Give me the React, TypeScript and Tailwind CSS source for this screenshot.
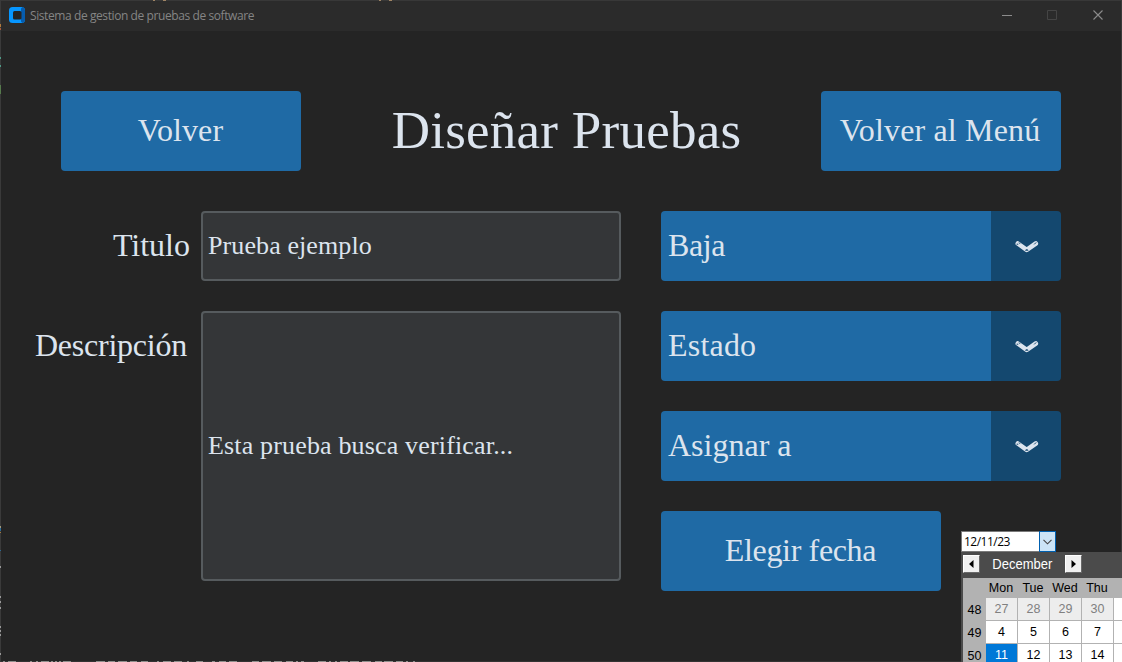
import type { ReactNode } from "react";

const SERIF = "font-['Liberation_Serif',serif] text-[#dce4ee]";
const SANS = "font-['Liberation_Sans',sans-serif]";

function Button({ className, children }: { className: string; children: ReactNode }) {
  return (
    <button className={`flex h-20 shrink-0 items-center justify-center rounded bg-[#1f6aa5] pb-0.5 text-[32px] leading-none whitespace-nowrap ${SERIF} ${className}`}>
      {children}
    </button>
  );
}

function Chevron() {
  return (
    <svg width="24" height="14" viewBox="0 0 24 14" fill="none">
      <path d="M2.800 3.500 L11.700 9.900 L20.800 3.500" stroke="#dce4ee" strokeWidth="4.600" strokeLinecap="round" strokeLinejoin="round" />
      <path d="M1.600 4.200h1.700M4 2.500l1 1.300M19.200 4.400l2-2" stroke="#14486f" strokeWidth="1" />
      <path d="M10.200 10.700c0-2 3.200-2 3.200 0z" fill="#14486f" />
    </svg>
  );
}

function Select({ label, className }: { label: string; className: string }) {
  return (
    <div className="flex h-[70px] w-[400px] overflow-hidden rounded">
      <div className={`flex flex-1 items-center bg-[#1f6aa5] pb-0.5 pl-[7px] text-[32px] leading-none ${SERIF}`}>
        <span className={className}>{label}</span>
      </div>
      <div className="flex w-[70px] items-center justify-center bg-[#14486f] pt-px pl-0.5">
        <Chevron />
      </div>
    </div>
  );
}

function Arrow({ left }: { left?: boolean }) {
  return (
    <div className="flex h-[18px] w-[17px] items-center justify-center border border-t-white border-r-[#696969] border-b-[#696969] border-l-white bg-[#f0f0f0]">
      <svg width="5" height="8" viewBox="0 0 5 8">
        <path d={left ? "M4.500 0v8L0 4z" : "M.5 0v8L5 4z"} fill="#000" />
      </svg>
    </div>
  );
}

const weeks = [
  { n: 48, days: [27, 28, 29, 30], other: true },
  { n: 49, days: [4, 5, 6, 7], other: false },
  { n: 50, days: [11, 12, 13, 14], other: false },
];

function Calendar() {
  return (
    <div className={`absolute top-[21px] left-0 w-[200px] bg-[#4b4b4b] pl-0.5 text-[12px] leading-none ${SANS}`}>
      <div className="flex h-[26px] items-center pb-[2px]">
        <Arrow left />
        <span className="w-[85px] text-center text-[14px] text-white">
          <span className="inline-block origin-center scale-x-[.93]">December</span>
        </span>
        <Arrow />
      </div>
      <div className="flex h-5 bg-[#b2b2b2] pl-[22px] text-black">
        {["Mon", "Tue", "Wed", "Thu"].map((d) => (
          <span key={d} className="w-8 pt-1 text-center text-[12.5px]">{d}</span>
        ))}
      </div>
      {weeks.map((w) => (
        <div key={w.n} className="flex h-[23px] bg-[#b2b2b2]">
          <span className="flex w-[23px] items-center justify-center pt-px text-[12.5px]">{w.n}</span>
          {w.days.map((d) => (
            <span
              key={d}
              className={`mr-px flex h-[22px] w-[31px] items-center justify-center text-[12.5px] ${
                w.other ? "bg-[#ededed] text-[#808080]" : d === 11 ? "bg-[#0078d7] text-white" : "bg-white text-black"
              }`}
            >
              {d}
            </span>
          ))}
          <span className="h-[22px] w-8 bg-white" />
        </div>
      ))}
    </div>
  );
}

function DatePicker() {
  return (
    <div className="relative mt-5 ml-5 h-[21px] w-[95px]">
      <div className="flex h-[21px] border border-[#7a7a7a] bg-white">
        <span className="flex-1 pt-[2px] pl-[2px] font-['Open_Sans',sans-serif] text-[12px] leading-[15px] tracking-[-0.5px] text-black">12/11/23</span>
        <span className="-my-px -mr-px flex w-[17px] items-center justify-center border border-[#0060b0] bg-[#cce4f7]">
          <svg width="9" height="6" viewBox="0 0 9 6" fill="none" stroke="#444" strokeWidth="1.100">
            <path d="M.5 .8l4 4 4-4" />
          </svg>
        </span>
      </div>
      <Calendar />
    </div>
  );
}

function TitleBar() {
  return (
    <header className="flex h-[31px] shrink-0 items-center border-t border-[#383838] bg-[#2b2b2b] pl-[9px]">
      <svg className="-mt-0.5" width="16" height="16" viewBox="0 0 16 16">
        <rect width="16" height="16" rx="3.500" fill="#0696ff" />
        <path d="M12 1.500L13.500 0A3.500 3.500 0 0 1 16 3.500v9a3.500 3.500 0 0 1-2.500 3.500L12 14.500z" fill="#065cad" />
        <rect x="4" y="4" width="8.500" height="8.500" rx="1.500" fill="#242424" />
      </svg>
      <span className="ml-[5px] w-[226px] font-['Open_Sans',sans-serif] text-[12px] leading-4 tracking-[-0.41px] whitespace-nowrap text-[#858585]">
        Sistema de gestion de pruebas de software
      </span>
      <svg className="mr-[18px] ml-auto -mt-0.5" width="102" height="12" viewBox="0 0 102 12" fill="none">
        <path d="M0 6.500h10" stroke="#8c8c8c" />
        <path d="M45.500 1.500h9v9h-9z" stroke="#454545" />
        <path d="M91.500 1.500l9 9m0-9l-9 9" stroke="#8c8c8c" strokeWidth="1.100" />
      </svg>
    </header>
  );
}

const sideMarks: [number, number, string][] = [
  [24, 3, "#b07a3c"], [28, 2, "#a65a3a"], [57, 2, "#4e9a86"], [65, 2, "#4e9a86"], [85, 9, "#567a4c"],
  [526, 2, "#a09a80"], [528, 3, "#2a6a98"], [532, 1, "#a07a40"], [550, 1, "#2a6a98"], [566, 2, "#999"],
  [596, 2, "#999"], [601, 2, "#999"], [607, 2, "#999"], [626, 2, "#999"], [630, 2, "#999"], [634, 2, "#999"], [653, 2, "#999"],
];

const bottomMarks: [number, number][] = [
  [3, 2], [8, 8], [30, 2], [36, 2], [41, 8], [51, 2], [55, 2], [59, 2], [63, 8], [96, 9], [108, 7], [118, 9],
  [130, 7], [141, 7], [157, 2], [163, 8], [174, 8], [187, 2], [196, 7], [212, 3], [219, 7], [229, 8], [252, 7],
  [262, 9], [274, 8], [286, 7], [296, 2], [301, 3], [318, 8], [329, 2], [335, 2], [340, 8], [350, 9], [362, 9],
  [375, 7], [384, 9], [396, 7], [406, 2], [413, 2],
];

function WindowEdges() {
  return (
    <svg className="pointer-events-none absolute inset-0" width="1122" height="662" shapeRendering="crispEdges">
      <path d="M0 0h1v662h-1z M1121 0h1v552h-1z" fill="#3a3a3a" />
      <path d="M1 661h960v1h-960z" fill="#333" />
      {sideMarks.map(([y, h, c]) => <rect key={y} x="0" y={y} width="1" height={h} fill={c} />)}
      {bottomMarks.map(([x, w]) => <rect key={x} x={x} y="661" width={w} height="1" fill="#8f8f8c" />)}
      <path d="M153 0h2M163 0h3M379 0h2M389 0h3" stroke="#a08565" strokeWidth="2" />
    </svg>
  );
}

export default function App() {
  return (
    <div className="relative flex h-[662px] w-[1122px] flex-col overflow-hidden bg-[#242424]">
      <TitleBar />
      <main className="flex flex-col pt-[60px] pl-[21px]">
        <div className="flex items-center pl-10">
          <Button className="w-60"><span className="-ml-px tracking-[0.1px]">Volver</span></Button>
          <h1 className={`w-[520px] pb-px pl-[11px] text-center text-[53px] leading-none tracking-[0.25px] ${SERIF}`}>Diseñar Pruebas</h1>
          <Button className="w-60"><span className="-ml-0.5 tracking-[0.15px]">Volver al Menú</span></Button>
        </div>
        <div className="mt-10 flex">
          <div className="flex w-[600px] flex-col gap-[30px]">
            <div className="flex">
              <label className={`flex w-[180px] items-center justify-end pr-[11px] pb-0.5 text-[32px] leading-none ${SERIF}`}>Titulo</label>
              <div className={`flex h-[70px] w-[420px] items-center rounded border-2 border-[#565b5e] bg-[#343638] pl-[5px] text-[26px] leading-none tracking-[0.1px] ${SERIF}`}>Prueba ejemplo</div>
            </div>
            <div className="flex">
              <label className={`flex h-[70px] w-[180px] items-center justify-end pr-[14px] pb-0.5 text-[32px] leading-none tracking-[-0.23px] ${SERIF}`}>Descripción</label>
              <div className={`flex h-[270px] w-[420px] items-center rounded border-2 border-[#565b5e] bg-[#343638] pl-[5px] text-[26px] leading-none tracking-[0.16px] ${SERIF}`}>Esta prueba busca verificar...</div>
            </div>
          </div>
          <div className="ml-10 flex flex-col gap-[30px]">
            <Select label="Baja" className="tracking-[-0.4px]" />
            <Select label="Estado" className="tracking-[0.2px]" />
            <Select label="Asignar a" className="tracking-normal" />
            <div className="flex">
              <Button className="w-[280px]"><span className="-ml-px tracking-[-0.35px]">Elegir fecha</span></Button>
              <DatePicker />
            </div>
          </div>
        </div>
      </main>
      <WindowEdges />
    </div>
  );
}
